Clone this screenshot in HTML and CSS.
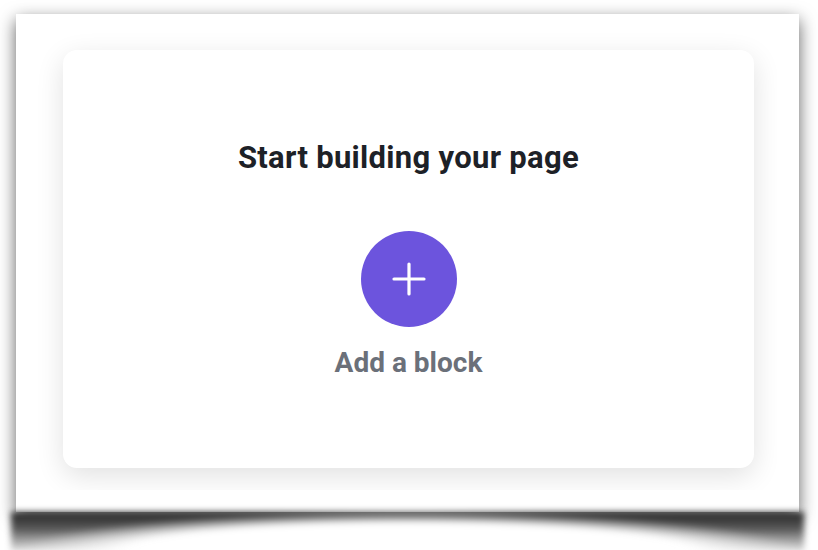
FILE: index.html
```html
<!DOCTYPE html>
<html lang="en">

<head>
    <meta charset="UTF-8">
    <meta name="viewport" content="width=device-width, initial-scale=1.0">
    <title>Start building your page</title>
    <link rel="stylesheet" href="styles.css">
</head>

<body>
    <div class="window">
        <div class="stage">
            <div class="card">
                <h1>Start building your page</h1>
                <button class="add-btn" type="button" aria-label="Add a block">
                    <svg width="34" height="34" viewBox="0 0 34 34">
                        <path d="M17 2v30M2 17h30" stroke="#fff" stroke-width="3.2" stroke-linecap="round" fill="none" />
                    </svg>
                </button>
                <div class="add-label">Add a block</div>
            </div>
        </div>
    </div>
</body>

</html>
```

FILE: styles.css
```css
html,
body {
    margin: 0;
    height: 100%;
    background: #fff;
    overflow: hidden;
}

body {
    font-family: Roboto, "Liberation Sans", Arial, sans-serif;
    padding: 14px 19px 0 16px;
    box-sizing: border-box;
}

.window {
    position: relative;
    width: 783px;
    height: 498px;
    background: #fff;
    box-shadow: 0 6px 16px rgba(0, 0, 0, 0.62);
}

/* curled shadow under the window */
.window::after {
    content: "";
    position: absolute;
    top: 100%;
    left: -5px;
    right: -5px;
    height: 40px;
    background:
        radial-gradient(ellipse 50% 100% at 50% 100%, #fff 72%, rgba(255, 255, 255, 0) 100%),
        linear-gradient(to bottom, #262626 0%, #555 40%, rgba(0, 0, 0, 0.08) 100%);
    filter: blur(3px);
}

.stage {
    position: relative;
    z-index: 1;
    margin: 0 22px 0 21px;
    padding: 36px 23px 22px 26px;
    overflow: hidden;
}

.card {
    height: 418px;
    background: #fff;
    border-radius: 14px;
    box-shadow: 0 8px 28px rgba(0, 0, 0, 0.12);
    display: flex;
    flex-direction: column;
    align-items: center;
}

h1 {
    margin: 89px 0 0;
    font-size: 31px;
    font-weight: 700;
    letter-spacing: 0.3px;
    line-height: 38px;
    color: #1d2127;
}

.add-btn {
    margin-top: 54px;
    width: 96px;
    height: 96px;
    border: none;
    border-radius: 50%;
    background: #6c54dd;
    display: flex;
    align-items: center;
    justify-content: center;
    padding: 0;
    cursor: pointer;
}

.add-label {
    margin-top: 19px;
    font-size: 28px;
    font-weight: 700;
    line-height: 34px;
    color: #6b7079;
}
```
